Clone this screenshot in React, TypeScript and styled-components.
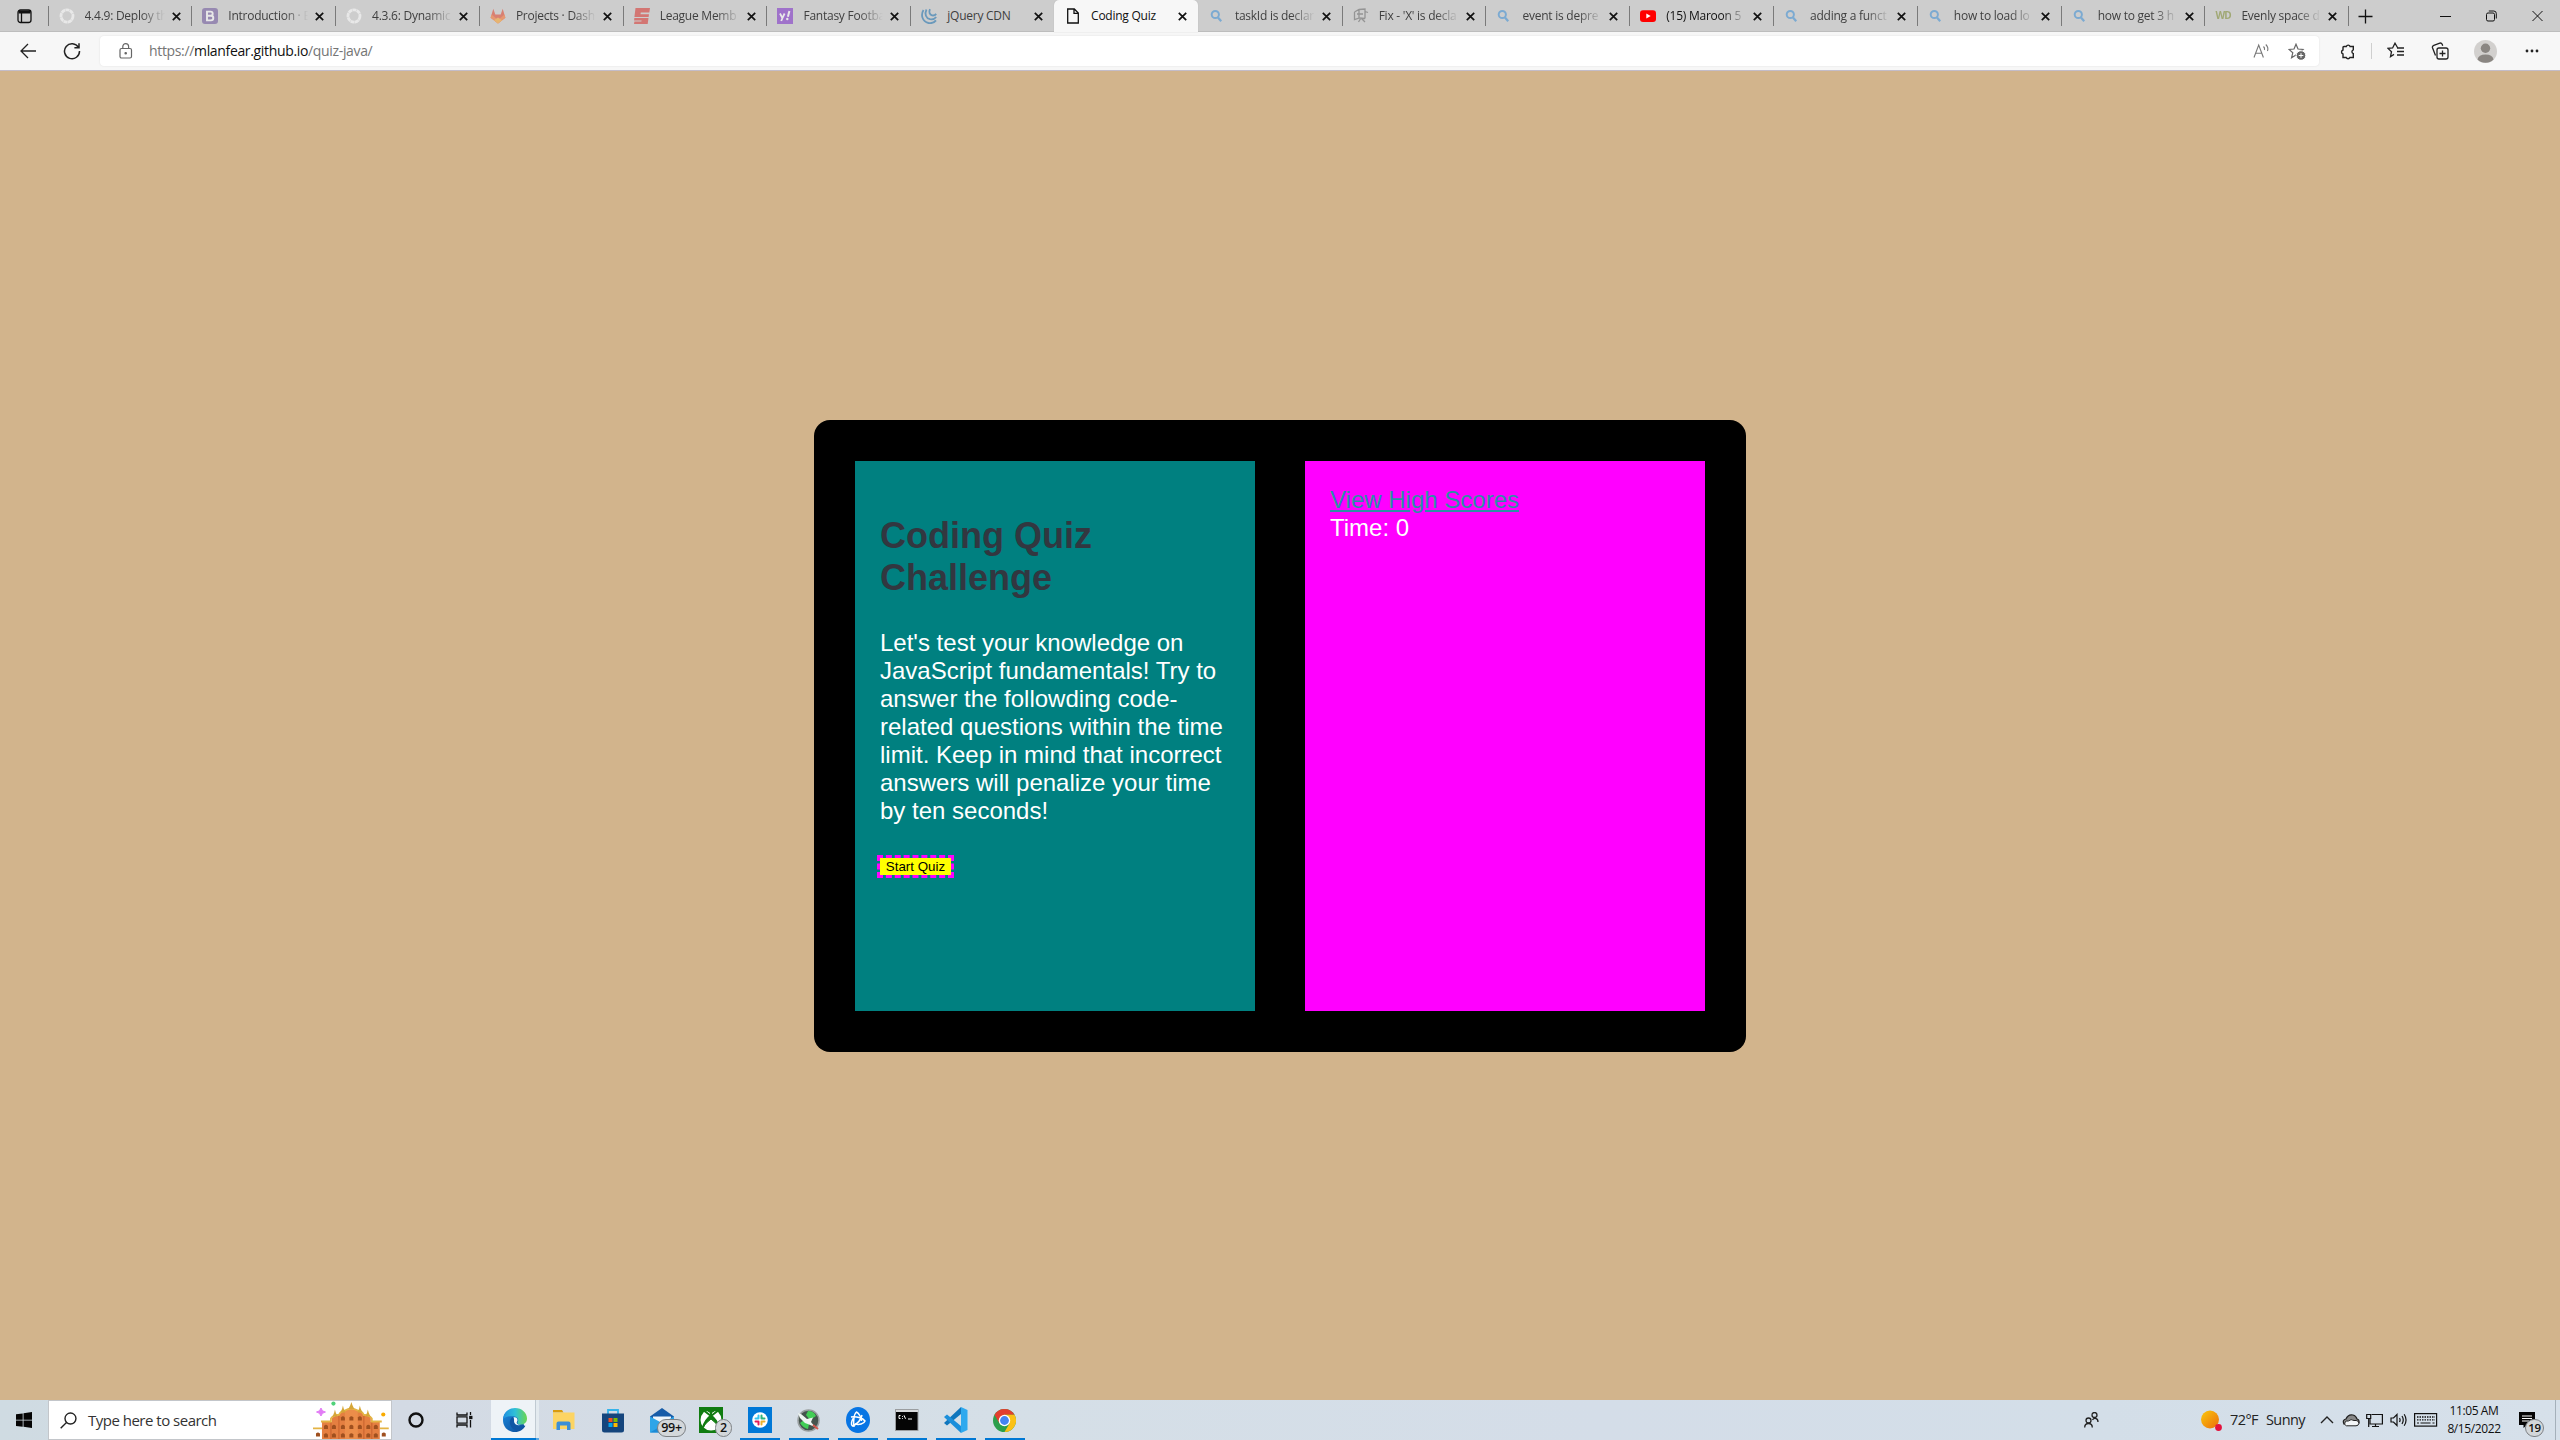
import React from "react";
import styled, { createGlobalStyle, css } from "styled-components";

const Global = createGlobalStyle`
  * { box-sizing: border-box; }
  body { margin: 0; background: #d2b48c; overflow: hidden; }
`;

const UI_FONT = `"Open Sans", "Noto Sans", sans-serif`;

const Screen = styled.div`
  width: 2560px;
  height: 1440px;
  display: flex;
  flex-direction: column;
  font-family: ${UI_FONT};
`;

/* ---------- browser chrome ---------- */

const TabStrip = styled.div`
  flex: none;
  height: 32px;
  display: flex;
  background: #cdcdcd;
  box-shadow: inset 0 -1px 0 #bdbdbd;
`;

const TabMenu = styled.div`
  width: 47.5px;
  padding: 9px 0 0 17px;
  line-height: 0;
`;

const TabBox = styled.div<{ $active?: boolean; $line?: boolean }>`
  width: 143.8px;
  height: 32px;
  display: flex;
  align-items: center;
  position: relative;
  padding-left: 11px;
  ${(p) => p.$active && css`
    background: #f7f7f7;
    border-radius: 5px 5px 0 0;
    box-shadow: 0 0 1px #a8a8a8;
  `}
  ${(p) => p.$line && css`
    background: linear-gradient(#7a7a7a, #7a7a7a) 0 6px / 1px 20px no-repeat;
  `}
`;

const Favicon = styled.span<{ $dim?: boolean }>`
  width: 16px;
  height: 16px;
  line-height: 0;
  flex: none;
  opacity: ${(p) => (p.$dim ? 0.55 : 1)};
`;

const TabTitle = styled.span<{ $strong?: boolean; $fade: boolean }>`
  width: 86px;
  flex: none;
  margin-left: 10px;
  white-space: nowrap;
  font-size: 12px;
  line-height: 16px;
  letter-spacing: -0.25px;
  color: ${(p) => (p.$strong ? "#111" : "#3f3f3f")};
  ${(p) => p.$fade && css`
    mask-image: linear-gradient(to right, #000 56px, transparent 80px);
  `}
`;

const TabClose = styled.span`
  margin-left: 1px;
  line-height: 0;
`;

const NewTab = styled.div`
  padding: 9px 0 0 10px;
  line-height: 0;
  width: 92px;
  background: linear-gradient(#7a7a7a, #7a7a7a) 0 6px / 1px 20px no-repeat;
`;

const WindowButtons = styled.div`
  display: flex;
  gap: 34px;
  padding-top: 10px;
  line-height: 0;
`;

const Toolbar = styled.div`
  flex: none;
  height: 39px;
  background: #f7f7f7;
  border-bottom: 1px solid #c3bcc9;
  display: flex;
  align-items: center;
`;

const NavButtons = styled.div`
  width: 100px;
  padding-left: 19px;
  display: flex;
  gap: 26px;
  line-height: 0;
`;

const AddressBar = styled.div`
  width: 2219px;
  height: 30px;
  background: #fff;
  border-radius: 4px;
  box-shadow: 0 0 2px #dedede;
  display: flex;
  align-items: center;
  padding: 0 13px 0 18px;
`;

const Url = styled.span`
  flex: 1;
  margin-left: 16px;
  font-size: 14px;
  line-height: 20px;
  letter-spacing: -0.34px;
  color: #757575;
  b { font-weight: 400; color: #111; }
`;

const AddressActions = styled.span`
  display: flex;
  gap: 18px;
  line-height: 0;
`;

const ToolbarIcons = styled.div`
  flex: 1;
  display: flex;
  align-items: center;
  padding-left: 20px;
  line-height: 0;
`;

const ToolIcon = styled.span<{ $gap: number }>`
  margin-right: ${(p) => p.$gap}px;
`;

const ToolDivider = styled.span`
  width: 1px;
  height: 16px;
  background: #cfcfcf;
  margin-right: 15px;
`;

/* ---------- quiz page ---------- */

const Page = styled.main`
  flex: 1;
  background: #d2b48c;
  display: flex;
  justify-content: center;
  align-items: flex-start;
  padding-top: 349px;
  font-family: "Liberation Sans", Arial, sans-serif;
`;

const Board = styled.section`
  display: flex;
  gap: 50px;
  padding: 41px;
  width: 932px;
  height: 632px;
  border-radius: 16px;
  background: #000;
`;

const Panel = styled.div<{ $color: string }>`
  width: 400px;
  height: 550px;
  padding: 25px;
  background: ${(p) => p.$color};
  color: #fff;
  font-size: 24px;
  line-height: 28px;
`;

const Heading = styled.h1`
  margin: 29px 0 30px;
  font-size: 36px;
  line-height: 42px;
  font-weight: 700;
  color: #323740;
`;

const Intro = styled.p`
  margin: 0 0 33px;
`;

const StartButton = styled.button`
  display: block;
  width: 71px;
  height: 17px;
  padding: 0;
  border: 0;
  background: #ff0;
  color: #000;
  outline: 3px dashed #f0f;
  font: 13.333px/17px "Liberation Sans", Arial, sans-serif;
`;

const ScoresLink = styled.a`
  color: #2b8fa5;
  text-decoration: underline;
`;

/* ---------- taskbar ---------- */

const Taskbar = styled.footer`
  flex: none;
  height: 40px;
  display: flex;
  background: linear-gradient(90deg, #cfdbe2 0, #d3dae4 400px, #d5dfe7 1000px, #d4dde8 1600px, #d3dee8 2100px, #d6e0ea 100%);
`;

const StartMenu = styled.div`
  width: 48px;
  padding: 12px 16px;
  line-height: 0;
`;

const SearchBox = styled.div`
  width: 344px;
  height: 40px;
  background: #fff;
  border: 1px solid #c3c6ca;
  display: flex;
  align-items: center;
  padding-left: 11px;
`;

const SearchText = styled.span`
  width: 226px;
  margin-left: 11px;
  font-size: 15px;
  line-height: 20px;
  letter-spacing: -0.5px;
  color: #333;
`;

const TaskSlot = styled.div<{ $w?: number; $bar?: boolean; $on?: boolean }>`
  width: ${(p) => p.$w ?? 49}px;
  height: 40px;
  display: flex;
  align-items: center;
  justify-content: center;
  position: relative;
  line-height: 0;
  ${(p) => p.$on && css`
    margin-left: 3px;
    background:
      linear-gradient(90deg, #0078d4 45px, #5ba8e2 45px) 0 38px / 48px 2px no-repeat,
      linear-gradient(90deg, #eef3f7 44px, #c0cad2 44px, #c0cad2 45px, #e3eaef 45px);
  `}
  ${(p) => p.$bar && css`
    background: linear-gradient(#0078d4, #0078d4) 5px 38px / 40px 2px no-repeat;
  `}
`;

const Badge = styled.span<{ $left: number; $w: number; $size: number }>`
  position: absolute;
  left: ${(p) => p.$left}px;
  top: 19px;
  width: ${(p) => p.$w}px;
  height: 18px;
  border: 1px solid #7d8185;
  border-radius: 9px;
  background: #d3d7da;
  color: #111;
  font-size: ${(p) => p.$size}px;
  font-weight: 600;
  letter-spacing: -0.3px;
  line-height: 16px;
  text-align: center;
`;

const Tray = styled.div`
  margin-left: auto;
  width: 476px;
  display: flex;
  align-items: center;
  line-height: 0;
`;

const TrayItem = styled.span<{ $w: number }>`
  width: ${(p) => p.$w}px;
  flex: none;
`;

const WeatherText = styled.span<{ $w: number }>`
  width: ${(p) => p.$w}px;
  flex: none;
  font-size: 14.5px;
  line-height: 20px;
  letter-spacing: -0.6px;
  color: #222;
  white-space: nowrap;
`;

const Clock = styled.div`
  width: 58px;
  margin-right: 2px;
  text-align: center;
  font-size: 12px;
  line-height: 18px;
  letter-spacing: -0.4px;
  color: #111;
  white-space: nowrap;
`;

const Notify = styled.div`
  width: 50px;
  height: 40px;
  padding: 12px 0 0 14px;
  position: relative;
`;

const DesktopEdge = styled.div`
  width: 5px;
  height: 40px;
  margin-left: auto;
  border-left: 1px solid #a5b0ba;
`;

/* ---------- icons ---------- */

const Svg = ({ w = 16, h = w, vb, children, sw = 1 }: { w?: number; h?: number; vb?: string; sw?: number; children: React.ReactNode }) => (
  <svg width={w} height={h} viewBox={vb ?? `0 0 ${w} ${h}`} fill="none" stroke="#222" strokeWidth={sw}>
    {children}
  </svg>
);

const icons: Record<string, React.ReactNode> = {
  canvas: <Svg><ellipse cx="8" cy="8" rx="6" ry="6.2" stroke="#fff" strokeWidth="2.8" strokeDasharray="4 .4" /></Svg>,
  bootstrap: <Svg><rect width="16" height="16" rx="3" fill="#6b539b" stroke="none" /><path d="M5 3.6h3.6a2.1 2.1 0 0 1 0 4.2H5zM5 7.8h4a2.3 2.3 0 0 1 0 4.6H5z" stroke="#fff" strokeWidth="1.9" /></Svg>,
  gitlab: <Svg><g stroke="none"><path d="M8 15.5.6 9.7 3.3.8l2 5.6h5.4l2-5.6 2.7 8.9z" fill="#e24329" /><path d="M8 15.5.6 9.7l.9-3.2L8 12l6.500-5.500.9 3.200z" fill="#fc6d26" /><path d="m8 15.500-4-3.200L8 9.500l4 2.800z" fill="#fca326" /></g></Svg>,
  espn: <Svg><g fill="#d8302b" stroke="none"><path d="M1.500 0H16l-.7 4.500H6.800l-.3 1.800H15L14.600 9H.4z" /><path d="M.3 10h14.200l-.8 6H0l.4-2.500h7l.2-1H.1z" /></g></Svg>,
  yahoo: <Svg><rect width="16" height="16" fill="#7b28c8" stroke="none" /><path d="m3 5.500 2.400 4.600L7.600 5.500M5.500 10l-1.300 3" stroke="#fff" strokeWidth="1.800" /><path d="m12.400 3-1.500 5.800" stroke="#fff" strokeWidth="2" /><circle cx="10.300" cy="11" r="1.200" fill="#fff" stroke="none" /></Svg>,
  jquery: <Svg sw={1.800}><g stroke="#1a6fae"><path d="M2.500 2C-.5 7 1.200 13.500 7.500 15c3.500.6 6-.6 7.500-2.600" /><path d="M5.500 1.500C3.300 6 5 10.300 9 11.200c3 .5 5-.6 6.200-2.200" /><path d="M9 1.200c-1.500 3-.3 5.500 2 6.200 2 .4 3.400-.4 4.200-1.500" /></g></Svg>,
  file: <Svg sw={1.300}><path d="M2.700 1h6.600l4 4v10H2.700zM9 1v4.300h4.300" stroke="#111" /></Svg>,
  search: <Svg sw={2}><circle cx="6.300" cy="6.500" r="3.600" stroke="#3b8fd6" /><path d="m9 9.500 3.200 3.700" stroke="#3b8fd6" strokeWidth="2.200" /></Svg>,
  fix: <Svg sw={1.300}><g stroke="#666"><path d="M1.500 4 6 1.500 12 1v9.500M1.500 4v7.500L6 10V1.500M6 10l6 .5M4 6h6M5.500 14l2.500-4 4 4M12 3.500l3 1" /></g></Svg>,
  youtube: <Svg><rect y="2.200" width="16" height="11.800" rx="3" fill="#f00" stroke="none" /><path d="M6.300 5.600v5l4.400-2.500z" fill="#fff" stroke="none" /></Svg>,
};

const WdMark = styled.span`
  display: block;
  font: 700 10px/15px ${UI_FONT};
  color: #7c8a2c;
  letter-spacing: -0.9px;
`;

type TabInfo = { title: string; icon: string; fade?: boolean; strong?: boolean; active?: boolean; bright?: boolean };

const tabs: TabInfo[] = [
  { title: "4.4.9: Deploy th", icon: "canvas", fade: true },
  { title: "Introduction · B", icon: "bootstrap", fade: true },
  { title: "4.3.6: Dynamic", icon: "canvas", fade: true },
  { title: "Projects · Dash", icon: "gitlab", fade: true },
  { title: "League Memb", icon: "espn", fade: true },
  { title: "Fantasy Footba", icon: "yahoo", fade: true },
  { title: "jQuery CDN", icon: "jquery" },
  { title: "Coding Quiz", icon: "file", active: true, strong: true, bright: true },
  { title: "taskId is declar", icon: "search", fade: true },
  { title: "Fix - 'X' is decla", icon: "fix", fade: true },
  { title: "event is depre", icon: "search", fade: true },
  { title: "(15) Maroon 5", icon: "youtube", fade: true, strong: true, bright: true },
  { title: "adding a funct", icon: "search", fade: true },
  { title: "how to load lo", icon: "search", fade: true },
  { title: "how to get 3 h", icon: "search", fade: true },
  { title: "Evenly space d", icon: "wd", fade: true },
];

const CloseX = () => <Svg w={9} sw={1.700}><path d="m.8.8 7.400 7.400M8.200.8.800 8.200" stroke="#111" /></Svg>;

const Tab = ({ tab, line }: { tab: TabInfo; line: boolean }) => (
  <TabBox $active={tab.active} $line={line}>
    <Favicon $dim={!tab.bright}>{tab.icon === "wd" ? <WdMark>WD</WdMark> : icons[tab.icon]}</Favicon>
    <TabTitle $strong={tab.strong} $fade={!!tab.fade}>{tab.title}</TabTitle>
    <TabClose><CloseX /></TabClose>
  </TabBox>
);

const STAR = "M8 1.200 10 6l5 .4-3.800 3.300 1.200 5L8 12l-4.400 2.700 1.200-5L1 6.400 6 6z";

const BrowserChrome = () => (
  <>
    <TabStrip>
      <TabMenu>
        <Svg w={15} sw={1.300}><rect x="1" y="1" width="13" height="12.500" rx="2.500" stroke="#111" /><path d="M1.500 3h12" stroke="#111" strokeWidth="3" /><path d="M4.500 3v10" stroke="#111" /></Svg>
      </TabMenu>
      {tabs.map((t, i) => (
        <Tab key={i} tab={t} line={!t.active && !tabs[i - 1]?.active} />
      ))}
      <NewTab><Svg w={15} sw={1.300}><path d="M7.500.5v14M.5 7.500h14" stroke="#111" /></Svg></NewTab>
      <WindowButtons>
        <Svg w={12}><path d="M0 6.500h11" stroke="#111" /></Svg>
        <Svg w={12}><rect x=".5" y="3" width="8" height="8" rx="1.500" stroke="#111" /><path d="M2.800 1h5q2.500 0 2.500 2.500v5" stroke="#111" /></Svg>
        <Svg w={12}><path d="m.5 1 10 10M10.500 1l-10 10" stroke="#111" /></Svg>
      </WindowButtons>
    </TabStrip>
    <Toolbar>
      <NavButtons>
        <Svg w={18} sw={1.300}><path d="M17 9H2M9 2 2 9l7 7" /></Svg>
        <Svg w={18} sw={1.500}><path d="M15.500 5.500A7.500 7.500 0 1 0 16.500 9M16 1.200v4.600h-4.600" /></Svg>
      </NavButtons>
      <AddressBar>
        <Svg w={15} h={18}><g stroke="#666" strokeWidth="1.200"><rect x="2" y="6.500" width="11.500" height="9.500" rx="1.500" /><path d="M4.800 6.500v-2a2.900 2.900 0 0 1 5.800 0v2" /><circle cx="7.700" cy="11.200" r=".7" fill="#666" /></g></Svg>
        <Url>https://<b>mlanfear.github.io</b>/quiz-java/</Url>
        <AddressActions>
          <Svg w={17}><g stroke="#777" strokeWidth="1.100"><path d="m1 14.500 4.700-12.500 4.700 12.500M2.700 10.300h6M10.500 3.500q1.500 1.500 1 3.500M12.800 1.500q3 3 1.700 6.500" /></g></Svg>
          <Svg w={18} h={17}><path d={STAR} stroke="#666" strokeWidth="1.200" /><circle cx="13" cy="12.500" r="4.800" fill="#666" stroke="#fff" /><path d="M13 10.200v4.600M10.700 12.500h4.600" stroke="#fff" /></Svg>
        </AddressActions>
      </AddressBar>
      <ToolbarIcons>
        <ToolIcon $gap={15}><Svg w={17} sw={1.400}><path d="M5 3.500h2.300a2 2 0 0 1 3.800 0H14.300v3.300a2 2 0 0 0 0 3.800v3.900h-3.400a2 2 0 0 1-3.700 0H4v-3.500a2.100 2.100 0 0 1 0-4V4.500q0-1 1-1z" /></Svg></ToolIcon>
        <ToolDivider />
        <ToolIcon $gap={26}><Svg w={18} sw={1.300}><path d="M10.500 5.500 8 1.200 5.600 6 1 6.400l3.500 3.300-1 5 3.500-2.300M10 6h7M10 9.500h7M10 13h7" /></Svg></ToolIcon>
        <ToolIcon $gap={25}><Svg w={18} sw={1.300}><rect x="6" y="6" width="11" height="11" rx="2" /><path d="M11.500 8.500v6M8.500 11.500h6M4.500 13.500 1.500 5.800q-.5-1.700 1.300-2.400l6-2.300q1.600-.4 2.400 1.200l.5 1.500" /></Svg></ToolIcon>
        <ToolIcon $gap={28}><Svg w={23}><circle cx="11.500" cy="11.500" r="11.500" fill="#d2d0ce" stroke="none" /><circle cx="11.500" cy="8.300" r="4.700" fill="#8a8682" stroke="none" /><path d="M3.500 19.500q1-5 8-5t8 5a11.500 11.500 0 0 1-16 0" fill="#8a8682" stroke="none" /></Svg></ToolIcon>
        <Svg w={14} h={4}><g fill="#222" stroke="none"><circle cx="2" cy="2" r="1.400" /><circle cx="7" cy="2" r="1.400" /><circle cx="12" cy="2" r="1.400" /></g></Svg>
      </ToolbarIcons>
    </Toolbar>
  </>
);

const Castle = () => (
  <Svg w={78} h={38}>
    <g stroke="none">
      <path d="m8 7 1.500 2.800L12.500 11l-3 1.300L8 15l-1.500-2.700-3-1.300 3-1.200z" fill="#e27cf5" stroke="#e27cf5" strokeWidth="1" />
      <circle cx="20.500" cy="2.500" r="2.100" fill="#4fd27a" />
      <circle cx="70.500" cy="13.500" r="2.100" fill="#f9ab00" />
      <path d="M9 38V21h10v-4q3-3 7-3 2-4 6-4 6-5 13 0 4 0 6 4 5 0 7 3v4h9v17z" fill="#e57f41" />
      <path d="M32 38V10q6-5 13 0v28z" fill="#ec8d4a" />
      <path d="M18 21v17M26 14v24M51 14v24M59 21v17" stroke="#cc6631" strokeWidth="1.200" />
      <path d="M8 20.500h10v-3q3-4 8-3.500 1.500-4 6-4.500 6-4 13 0 4.500.5 6 4.500 5-.5 8 3.500v3h10M0 27.500h9M67 27.500h9" stroke="#e4b444" strokeWidth="1.800" fill="none" />
      <g fill="#d5a638">
        <path d="M38.500 1l1 3 2 4h-6l2-4zM30 4.500l.8 3 1.800 4h-5l1.700-4zM47 4.500l.8 3 1.800 4h-5l1.700-4zM22 8.500l.8 3 1.800 4h-5l1.700-4zM55 8.500l.8 3 1.800 4h-5l1.700-4z" />
      </g>
      <g fill="#9f501f">
        {[13, 21, 30, 38.500, 47, 55.500, 63].map((x) => (
          <React.Fragment key={x}>
            <path d={`M${x - 2} 28v-3q2-2.500 4 0v3z`} />
            <path d={`M${x - 2} 36.500v-3q2-2.500 4 0v3z`} />
          </React.Fragment>
        ))}
        {[30, 38.500, 47].map((x) => <path key={x} d={`M${x - 2} 19.500v-3q2-2.500 4 0v3z`} />)}
        <path d="M3 35.500v-3q2-2 4 0v3zM69 35.500v-3q2-2 4 0v3z" />
      </g>
    </g>
  </Svg>
);

const EdgeLogo = () => (
  <svg width="24" height="24" viewBox="0 0 24 24">
    <defs>
      <linearGradient id="edgeTop" x1="0" y1=".4" x2="1" y2=".4"><stop offset="0" stopColor="#1f8fe0" /><stop offset=".5" stopColor="#2fc0d8" /><stop offset="1" stopColor="#6ad64f" /></linearGradient>
      <linearGradient id="edgeLow" x1="0" y1="0" x2="1" y2="1"><stop offset="0" stopColor="#1b8ade" /><stop offset="1" stopColor="#0c4a97" /></linearGradient>
    </defs>
    <path d="M0 12C0 5 5 1 12 1s8 20 10.500 16.500C20.500 21.500 17 24 12 24 5 24 0 19 0 12z" fill="url(#edgeLow)" />
    <path d="M.2 11C1 4 6 0 12 0c7 0 12 5 12 10.500 0 4-3 6-6 6-2.500 0-4-1-3.500-2 1.500-2 .8-6-4-6.300C6 8 2 9 .2 11z" fill="url(#edgeTop)" />
    <path d="M9.500 9C5 12 6 21 14 22.500c4-.5 7-3 8-5-4 2.500-9.500 1-10.500-3C11 12 12 10.500 9.500 9z" fill="#0f55a5" />
    <path d="M10.500 9.500c2-.8 4 .5 4 2.500 0 1.500-1 1.800-.8 3 .4 1.500 2.500 2 4.300 1.800-3 1.200-6-.2-6.800-2.600-.5-1.600.4-2.900-.7-4.700z" fill="#f4f9fc" />
  </svg>
);

const Apps = () => (
  <>
    <TaskSlot $w={48}><Svg w={16} sw={2.400}><circle cx="8" cy="8" r="6.500" stroke="#111" /></Svg></TaskSlot>
    <TaskSlot $w={48}>
      <Svg w={17} h={16} sw={1.300}><g stroke="#111"><path d="M1 .5V3h10V.500M1 15.500V13h10v2.500M1 4.800h10v6.400H1zM14.500 0v3M14.500 8v7.500" /><rect x="13.800" y="4.500" width="2" height="2" fill="#111" /></g></Svg>
    </TaskSlot>
    <TaskSlot $w={48} $on><EdgeLogo /></TaskSlot>
    <TaskSlot>
      <Svg w={22} h={20}><g stroke="none"><path d="M0 0h9l1.500 2.500H0z" fill="#d99b0e" /><rect y="2.500" width="21.500" height="16.500" fill="#fcd463" /><path d="M3.500 20v-6.500q0-2 2-2h10q2 0 2 2V20h-3.500v-4.500h-7V20z" fill="#3b8fd8" /></g></Svg>
    </TaskSlot>
    <TaskSlot>
      <Svg w={24} h={25}><path d="M7 7V2h10v5" stroke="#35b3ea" strokeWidth="1.800" /><path d="M1 5.500h22V22q0 2.500-2.500 2.500h-17Q1 24.500 1 22z" fill="#15457d" stroke="none" /><g stroke="none"><path d="M7.500 10h4v4h-4z" fill="#f25022" /><path d="M12.500 10h4v4h-4z" fill="#7fba00" /><path d="M7.500 15h4v4h-4z" fill="#00a4ef" /><path d="M12.500 15h4v4h-4z" fill="#ffb900" /></g></Svg>
    </TaskSlot>
    <TaskSlot>
      <Svg w={24} h={25}><g stroke="none"><path d="M0 8.500 12 0l12 8.500v5H0z" fill="#175ca8" /><path d="M3 8.500h18V15H3z" fill="#eff5fa" /><path d="M0 8.500 12 15l12-6.500V24.500H0z" fill="#2ea5e8" /><path d="m0 24.500 24-14v14z" fill="#1c8ad6" /></g></Svg>
      <Badge $left={20} $w={29} $size={12.500}>99+</Badge>
    </TaskSlot>
    <TaskSlot>
      <Svg w={24} h={26}><rect width="24" height="26" fill="#107c10" stroke="none" /><circle cx="12" cy="13" r="10.500" fill="#fff" stroke="none" /><path d="M5 3.500q4-.5 7 2.500 3-3 7-2.500-3-2-7-2t-7 2zM4 20.500Q6 13.500 12 8.500q6 5 8 12-2-4-8-8.500-6 4.500-8 8.500z" fill="#107c10" stroke="#107c10" /><path d="M12 8.500Q6 13 4 20.500M12 8.500q6 4.500 8 12M12 9V5M5.500 4 12 9l6.500-5" stroke="#107c10" strokeWidth="2" /></Svg>
      <Badge $left={29} $w={17} $size={12.500}>2</Badge>
    </TaskSlot>
    <TaskSlot $bar>
      <Svg w={24} h={26}><rect width="24" height="26" fill="#0078d7" stroke="none" /><circle cx="12" cy="13" r="7.800" fill="#fff" stroke="none" /><g strokeWidth="2" strokeLinecap="round"><path d="M10.500 8.500v3M7.500 11.500h2" stroke="#36c5f0" /><path d="M13.500 8.500v3M16.500 11.500h-2" stroke="#2eb67d" /><path d="M10.500 17.500v-3M7.500 14.500h2" stroke="#e01e5a" /><path d="M13.500 17.500v-3M16.500 14.500h-2" stroke="#ecb22e" /></g></Svg>
    </TaskSlot>
    <TaskSlot $bar>
      <Svg w={23} h={25}><circle cx="11.500" cy="12.500" r="10.500" fill="#45544d" stroke="#999fa0" strokeWidth="1.500" /><path d="M11 3q6 0 8 5l-6 4-4-5zM3 15q3 5 8 6l1-5-5-4z" fill="#42ce55" stroke="none" /><path d="m1 5 3 1 6 5 6-1.500-2 4.500 4 5-6-2.500-4-1.500-5-5z" fill="#eef5f0" stroke="none" /><path d="m16 17 5 4" stroke="#d4554a" strokeWidth="2" /></Svg>
    </TaskSlot>
    <TaskSlot $bar>
      <Svg w={24} h={26}><ellipse cx="12" cy="13" rx="12" ry="13" fill="#0875e4" stroke="none" /><g stroke="#fff" strokeWidth="1.500"><path d="M8 20C7 14 8 7 10.500 5c2.500 1 5 6 5 9" /><path d="M5 10c5-1 12 1 14 4-1 3-6 4-10 3" /><path d="M16 8c-1 5-5 9-9.500 11-2-1-1-5 1-8" /></g></Svg>
    </TaskSlot>
    <TaskSlot $bar>
      <Svg w={24} h={22}><rect x=".5" y=".5" width="22.500" height="21" fill="#050505" stroke="#9a9da0" /><path d="M1 2h22" stroke="#d8dadc" strokeWidth="2" /><path d="M5.500 6.500H4v3h1.500M7.500 7v.8M7.500 9v.8M9 6.300l1.500 3.500M13 10h4" stroke="#fff" /></Svg>
    </TaskSlot>
    <TaskSlot $bar>
      <Svg w={25} h={26}><g stroke="none"><path d="M18 0 24.500 3v20L18 26z" fill="#2fa9ee" /><path d="M18 0v7L4 18.500 1 16z" fill="#0f76bd" /><path d="M18 26v-7L4 7.500 1 10z" fill="#1b8fdb" /></g></Svg>
    </TaskSlot>
    <TaskSlot $bar>
      <Svg w={23} h={25} vb="0 0 24 24"><g stroke="none"><circle cx="12" cy="12" r="12" fill="#2c9f4b" /><path d="M1.600 6a12 12 0 0 1 20.800 0H12L6.800 15z" fill="#e33e2e" /><path d="M22.400 6A12 12 0 0 1 12 24l5.200-9L12 6z" fill="#fbc116" /><circle cx="12" cy="12" r="6" fill="#fff" /><circle cx="12" cy="12" r="4.600" fill="#4484f2" /></g></Svg>
    </TaskSlot>
  </>
);

const SystemTray = () => (
  <Tray>
    <TrayItem $w={116}>
      <Svg w={15} h={16} sw={1.300}><circle cx="4.500" cy="8.500" r="2.500" /><path d="M.7 15.500q0-4 3.800-4t3.800 4" /><circle cx="10.500" cy="3" r="2.500" /><path d="M8.500 8q1-2 3-1.600 2.500.5 2.500 3.600" /></Svg>
    </TrayItem>
    <TrayItem $w={30}>
      <Svg w={22} h={22}><defs><linearGradient id="sun" x1="0" y1="0" x2="1" y2="1"><stop offset="0" stopColor="#fbc80c" /><stop offset="1" stopColor="#ea6d0c" /></linearGradient></defs><circle cx="10" cy="10.500" r="9" fill="url(#sun)" stroke="none" /><circle cx="18.500" cy="18.500" r="3.400" fill="#e3123d" stroke="none" /></Svg>
    </TrayItem>
    <WeatherText $w={36}>72°F</WeatherText>
    <WeatherText $w={54}>Sunny</WeatherText>
    <TrayItem $w={22}><Svg w={14} h={8} sw={1.400}><path d="m1 7 6-6 6 6" /></Svg></TrayItem>
    <TrayItem $w={24}>
      <Svg w={18} h={13}><path d="M2 10Q0 6 4 5q2-5 7-4 3 .8 4 4 2.500.5 2 4z" fill="#888" stroke="#222" strokeWidth="1.200" /><path d="M4.500 11.800q-3-1-1.500-3.600 1.500-1.700 3.300-1.200Q9 4.500 12 6.500q5-.5 4.800 3-.3 2.300-2.800 2.300z" fill="#f3f6f8" stroke="#222" /></Svg>
    </TrayItem>
    <TrayItem $w={24}>
      <Svg w={17} h={15} sw={1.200}><g stroke="#111"><path d="M5.500 1.500h10.900V11H4V6M9.500 11v2.500M6 13.500h7" /><path d="M.7 1.500h4v4h-4zM2.700 5.500V14" /></g></Svg>
    </TrayItem>
    <TrayItem $w={24}>
      <Svg w={17} h={14} sw={1.200}><g stroke="#111"><path d="M1 5h2.500L7 1.500v11L3.500 9H1zM9.500 5q1.200 2 0 4M12 3q2.500 4 0 8M14.200 1.200q3.700 5.800 0 11.600" /></g></Svg>
    </TrayItem>
    <TrayItem $w={31}>
      <Svg w={24} h={14}><rect x=".6" y=".6" width="22" height="12.500" stroke="#111" strokeWidth="1.200" /><path d="M3 4h18M3 6.800h18" stroke="#111" strokeWidth="1.300" strokeDasharray="1.500 1" /><path d="M3 10h2M6.500 10h10M18.500 10h2" stroke="#111" strokeWidth="1.200" /></Svg>
    </TrayItem>
    <Clock>11:05 AM<br />8/15/2022</Clock>
    <Notify>
      <Svg w={16} h={16}><path d="M0 0h16v13H8l-3.500 3v-3H0z" fill="#050505" stroke="none" /><path d="M3 4h10M3 6.500h10M3 9h7" stroke="#fff" /></Svg>
      <Badge $left={20} $w={19} $size={11.500}>19</Badge>
    </Notify>
    <DesktopEdge />
  </Tray>
);

export default function App() {
  return (
    <Screen>
      <Global />
      <BrowserChrome />
      <Page>
        <Board>
          <Panel $color="#008080">
            <Heading>Coding Quiz Challenge</Heading>
            <Intro>
              Let's test your knowledge on JavaScript fundamentals! Try to answer the followding code-related
              questions within the time limit. Keep in mind that incorrect answers will penalize your time by ten
              seconds!
            </Intro>
            <StartButton>Start Quiz</StartButton>
          </Panel>
          <Panel $color="#ff00ff">
            <ScoresLink>View High Scores</ScoresLink>
            <div>Time: 0</div>
          </Panel>
        </Board>
      </Page>
      <Taskbar>
        <StartMenu>
          <Svg w={16} h={16}><path d="M0 2.300 6.700 1.400v6.300H0zM7.500 1.300 16 0v7.700H7.500zM0 8.500h6.700v6.300L0 13.900zM7.500 8.500H16V16l-8.500-1.200z" fill="#050505" stroke="none" /></Svg>
        </StartMenu>
        <SearchBox>
          <Svg w={17} h={17} sw={1.400}><circle cx="10.500" cy="6.500" r="5.500" /><path d="M6.500 10.500.7 16.300" /></Svg>
          <SearchText>Type here to search</SearchText>
          <Castle />
        </SearchBox>
        <Apps />
        <SystemTray />
      </Taskbar>
    </Screen>
  );
}
